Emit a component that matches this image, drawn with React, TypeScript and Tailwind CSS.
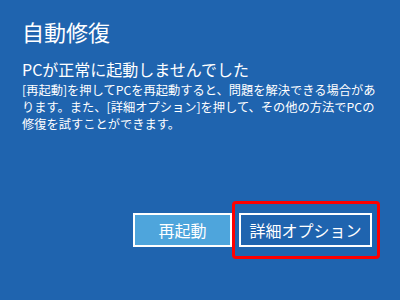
export default function App() {
  return (
    <div className="w-[400px] h-[300px] bg-[#1f64af] text-white px-[22px] pt-[17px] flex flex-col font-['Noto_Sans_CJK_JP',sans-serif] overflow-hidden">
      <h1 className="text-[22px] leading-[28px] font-normal">自動修復</h1>
      <h2 className="mt-[14px] text-[16px] leading-[20px] font-normal">PCが正常に起動しませんでした</h2>
      <p className="mt-[3px] text-[12.25px] leading-[17px] whitespace-nowrap">
        [再起動]を押してPCを再起動すると、問題を解決できる場合があ
        <br />
        ります。また、[詳細オプション]を押して、その他の方法でPCの
        <br />
        修復を試すことができます。
      </p>

      <div className="mt-[80px] flex justify-end gap-[7px] pr-[6px]">
        <button className="w-[99px] h-[34px] bg-[#4ea5dc] border-2 border-white text-[16px] text-white">
          再起動
        </button>
        <div className="relative">
          <button className="w-[133px] h-[34px] bg-[#1f64af] border-2 border-white text-[16px] text-white">
            詳細オプション
          </button>
          {/* highlight frame */}
          <span className="absolute left-[-7px] right-[-8px] top-[-12px] bottom-[-12px] border-[3px] border-[#ff0000] rounded-[4px] pointer-events-none" />
        </div>
      </div>
    </div>
  );
}
